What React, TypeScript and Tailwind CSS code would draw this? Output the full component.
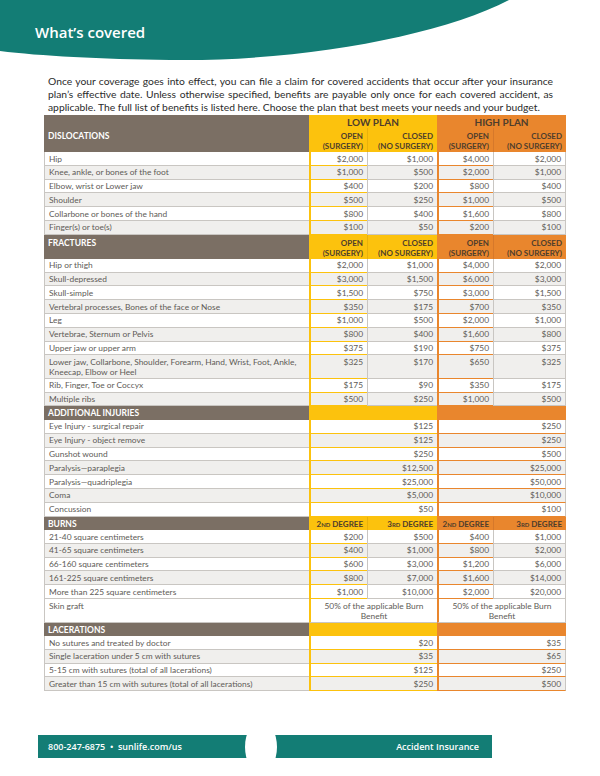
import React from "react";

const FONT = { fontFamily: 'Lato, "Open Sans", "Liberation Sans", sans-serif' };
const OPEN = { fontFamily: '"Open Sans", "Liberation Sans", sans-serif' };

type Row4 = { k: "4"; label: string; v: [string, string, string, string]; tall?: boolean };
type Row2 = { k: "2"; label: string; v: [string, string] };
type RowG = { k: "g"; label: string };
type Row = Row4 | Row2 | RowG;

const r4 = (label: string, a: string, b: string, c: string, d: string, tall?: boolean): Row4 => ({
  k: "4",
  label,
  v: [a, b, c, d],
  tall,
});
const r2 = (label: string, a: string, b: string): Row2 => ({ k: "2", label, v: [a, b] });

const dislocations: Row[] = [
  r4("Hip", "$2,000", "$1,000", "$4,000", "$2,000"),
  r4("Knee, ankle, or bones of the foot", "$1,000", "$500", "$2,000", "$1,000"),
  r4("Elbow, wrist or Lower jaw", "$400", "$200", "$800", "$400"),
  r4("Shoulder", "$500", "$250", "$1,000", "$500"),
  r4("Collarbone or bones of the hand", "$800", "$400", "$1,600", "$800"),
  r4("Finger(s) or toe(s)", "$100", "$50", "$200", "$100"),
];

const fractures: Row[] = [
  r4("Hip or thigh", "$2,000", "$1,000", "$4,000", "$2,000"),
  r4("Skull-depressed", "$3,000", "$1,500", "$6,000", "$3,000"),
  r4("Skull-simple", "$1,500", "$750", "$3,000", "$1,500"),
  r4("Vertebral processes, Bones of the face or Nose", "$350", "$175", "$700", "$350"),
  r4("Leg", "$1,000", "$500", "$2,000", "$1,000"),
  r4("Vertebrae, Sternum or Pelvis", "$800", "$400", "$1,600", "$800"),
  r4("Upper jaw or upper arm", "$375", "$190", "$750", "$375"),
  r4(
    "Lower jaw, Collarbone, Shoulder, Forearm, Hand, Wrist, Foot, Ankle, Kneecap, Elbow or Heel",
    "$325",
    "$170",
    "$650",
    "$325",
    true
  ),
  r4("Rib, Finger, Toe or Coccyx", "$175", "$90", "$350", "$175"),
  r4("Multiple ribs", "$500", "$250", "$1,000", "$500"),
];

const additional: Row[] = [
  r2("Eye Injury - surgical repair", "$125", "$250"),
  r2("Eye Injury - object remove", "$125", "$250"),
  r2("Gunshot wound", "$250", "$500"),
  r2("Paralysis\u2014paraplegia", "$12,500", "$25,000"),
  r2("Paralysis\u2014quadriplegia", "$25,000", "$50,000"),
  r2("Coma", "$5,000", "$10,000"),
  r2("Concussion", "$50", "$100"),
];

const burns: Row[] = [
  r4("21-40 square centimeters", "$200", "$500", "$400", "$1,000"),
  r4("41-65 square centimeters", "$400", "$1,000", "$800", "$2,000"),
  r4("66-160 square centimeters", "$600", "$3,000", "$1,200", "$6,000"),
  r4("161-225 square centimeters", "$800", "$7,000", "$1,600", "$14,000"),
  r4("More than 225 square centimeters", "$1,000", "$10,000", "$2,000", "$20,000"),
  { k: "g", label: "Skin graft" },
];

const lacerations: Row[] = [
  r2("No sutures and treated by doctor", "$20", "$35"),
  r2("Single laceration under 5 cm with sutures", "$35", "$65"),
  r2("5-15 cm with sutures (total of all lacerations)", "$125", "$250"),
  r2("Greater than 15 cm with sutures (total of all lacerations)", "$250", "$500"),
];

const YEL = "border-[#fcc20d]";
const ORG = "border-[#e9862d]";

function BodyRow({ row, idx }: { row: Row; idx: number }) {
  const bg = idx % 2 === 0 || row.k === "g" ? "bg-white" : "bg-[#f0efed]";
  const tall = (row.k === "4" && row.tall) || row.k === "g";
  const h = tall ? "h-[23.5px]" : "h-[13.8px]";
  const cell = "border-b border-[#c9c6c2] pr-[4px] pt-[1.5px] text-right";
  return (
    <div className={`flex ${h} ${bg} text-[8.4px] leading-[10px] text-[#5e5b57]`}>
      <div className="w-[265px] shrink-0 border-b border-l border-[#c9c6c2] pl-[4px] pr-[6px] pt-[1.5px]">
        {row.label}
      </div>
      {row.k === "4" && (
        <>
          <div className={`w-[58px] shrink-0 border-l-2 ${YEL} ${cell}`}>{row.v[0]}</div>
          <div className={`w-[70px] shrink-0 border-l border-l-[#c9c6c2] ${cell}`}>{row.v[1]}</div>
          <div className={`w-[56px] shrink-0 border-l-2 ${ORG} ${cell}`}>{row.v[2]}</div>
          <div className={`w-[73px] shrink-0 border-l border-r border-l-[#c9c6c2] border-r-[#c9c6c2] ${cell}`}>
            {row.v[3]}
          </div>
        </>
      )}
      {row.k === "2" && (
        <>
          <div className={`w-[128px] shrink-0 border-l-2 ${YEL} ${cell}`}>{row.v[0]}</div>
          <div className={`w-[129px] shrink-0 border-l-2 border-r ${ORG} border-r-[#c9c6c2] ${cell}`}>
            {row.v[1]}
          </div>
        </>
      )}
      {row.k === "g" && (
        <>
          <div
            className={`w-[128px] shrink-0 border-l-2 ${YEL} border-b border-b-[#c9c6c2] px-[12px] pt-[1.5px] text-center`}
          >
            50% of the applicable Burn Benefit
          </div>
          <div
            className={`w-[129px] shrink-0 border-l-2 border-r ${ORG} border-r-[#c9c6c2] border-b border-b-[#c9c6c2] px-[12px] pt-[1.5px] text-center`}
          >
            50% of the applicable Burn Benefit
          </div>
        </>
      )}
    </div>
  );
}

function SubHead({ title, kind }: { title: string; kind: "surgery" | "blank" | "degree" }) {
  const hd = "text-[8px] leading-[10px] font-bold text-[#4e3d2c] text-right pr-[4px]";
  const lab = "w-[265px] shrink-0 bg-[#7b6f64] pl-[4px] text-[8.5px] font-bold leading-[10px] text-white";
  if (kind === "surgery") {
    return (
      <div className="flex h-[24px]">
        <div className={`${lab} pt-[3px]`}>{title}</div>
        <div className={`w-[58px] shrink-0 bg-[#fcc20d] pt-[3px] ${hd}`}>
          OPEN
          <br />
          (SURGERY)
        </div>
        <div className={`w-[70px] shrink-0 border-l border-[#e8b10a] bg-[#fcc20d] pt-[3px] ${hd}`}>
          CLOSED
          <br />
          (NO SURGERY)
        </div>
        <div className={`w-[56px] shrink-0 bg-[#e9862d] pt-[3px] ${hd}`}>
          OPEN
          <br />
          (SURGERY)
        </div>
        <div className={`w-[73px] shrink-0 border-l border-[#d6782a] bg-[#e9862d] pt-[3px] ${hd}`}>
          CLOSED
          <br />
          (NO SURGERY)
        </div>
      </div>
    );
  }
  if (kind === "degree") {
    const deg = (n: string, s: string) => (
      <>
        {n}
        <span className="text-[6px]">{s}</span> DEGREE
      </>
    );
    return (
      <div className="flex h-[13.5px]">
        <div className={`${lab} pt-[2px]`}>{title}</div>
        <div className={`w-[58px] shrink-0 bg-[#fcc20d] pt-[2px] ${hd}`}>{deg("2", "ND")}</div>
        <div className={`w-[70px] shrink-0 border-l border-[#e8b10a] bg-[#fcc20d] pt-[2px] ${hd}`}>
          {deg("3", "RD")}
        </div>
        <div className={`w-[56px] shrink-0 bg-[#e9862d] pt-[2px] ${hd}`}>{deg("2", "ND")}</div>
        <div className={`w-[73px] shrink-0 border-l border-[#d6782a] bg-[#e9862d] pt-[2px] ${hd}`}>
          {deg("3", "RD")}
        </div>
      </div>
    );
  }
  return (
    <div className="flex h-[13.5px]">
      <div className={`${lab} pt-[2px]`}>{title}</div>
      <div className="w-[128px] shrink-0 bg-[#fcc20d]" />
      <div className="w-[129px] shrink-0 bg-[#e9862d]" />
    </div>
  );
}

function Section({ rows }: { rows: Row[] }) {
  return (
    <>
      {rows.map((r, i) => (
        <BodyRow key={i} row={r} idx={i} />
      ))}
    </>
  );
}

export default function App() {
  return (
    <div className="relative h-[776px] w-[600px] overflow-hidden bg-white" style={FONT}>
      {/* header */}
      <div className="relative h-[62px]">
        <svg className="absolute left-0 top-0" width="600" height="64" viewBox="0 0 600 64">
          <path d="M0 0 H509 C440 36 300 62 170 60 C100 59 40 56 0 51 Z" fill="#137d75" />
        </svg>
        <h1
          className="relative pl-[35px] pt-[22px] text-[15px] font-semibold leading-[20px] text-white"
          style={OPEN}
        >
          What&rsquo;s covered
        </h1>
      </div>

      {/* intro */}
      <p className="ml-[48px] mt-[13px] w-[505px] text-justify text-[10.3px] leading-[13px] text-[#2b2b2b]">
        Once your coverage goes into effect, you can file a claim for covered accidents that occur after your
        insurance plan&rsquo;s effective date. Unless otherwise specified, benefits are payable only once for each
        covered accident, as applicable. The full list of benefits is listed here. Choose the plan that best meets your
        needs and your budget.
      </p>

      {/* table */}
      <div className="ml-[44px] mt-[1px] w-[522px]">
        <div className="flex h-[13px]">
          <div className="w-[265px] shrink-0 bg-[#7b6f64]" />
          <div className="w-[128px] shrink-0 bg-[#fcc20d] pt-[1px] text-center text-[10px] font-bold leading-[12px] text-[#4e3d2c]">
            LOW PLAN
          </div>
          <div className="w-[129px] shrink-0 bg-[#e9862d] pt-[1px] text-center text-[10px] font-bold leading-[12px] text-[#4e3d2c]">
            HIGH PLAN
          </div>
        </div>
        <SubHead title="DISLOCATIONS" kind="surgery" />
        <Section rows={dislocations} />
        <SubHead title="FRACTURES" kind="surgery" />
        <Section rows={fractures} />
        <SubHead title="ADDITIONAL INJURIES" kind="blank" />
        <Section rows={additional} />
        <SubHead title="BURNS" kind="degree" />
        <Section rows={burns} />
        <SubHead title="LACERATIONS" kind="blank" />
        <Section rows={lacerations} />
      </div>

      {/* footer */}
      <div
        className="relative ml-[38px] mt-[44px] flex h-[23px] w-[454px] items-center justify-between overflow-hidden bg-[#137d75] pl-[10px] pr-[13px] text-[9px] font-semibold text-white"
        style={OPEN}
      >
        <span>800-247-6875 &nbsp;&bull;&nbsp; sunlife.com/us</span>
        <span>Accident Insurance</span>
        <div className="absolute left-[207px] top-[-14.5px] h-[52px] w-[32px] rounded-[50%] bg-white" />
      </div>
    </div>
  );
}
